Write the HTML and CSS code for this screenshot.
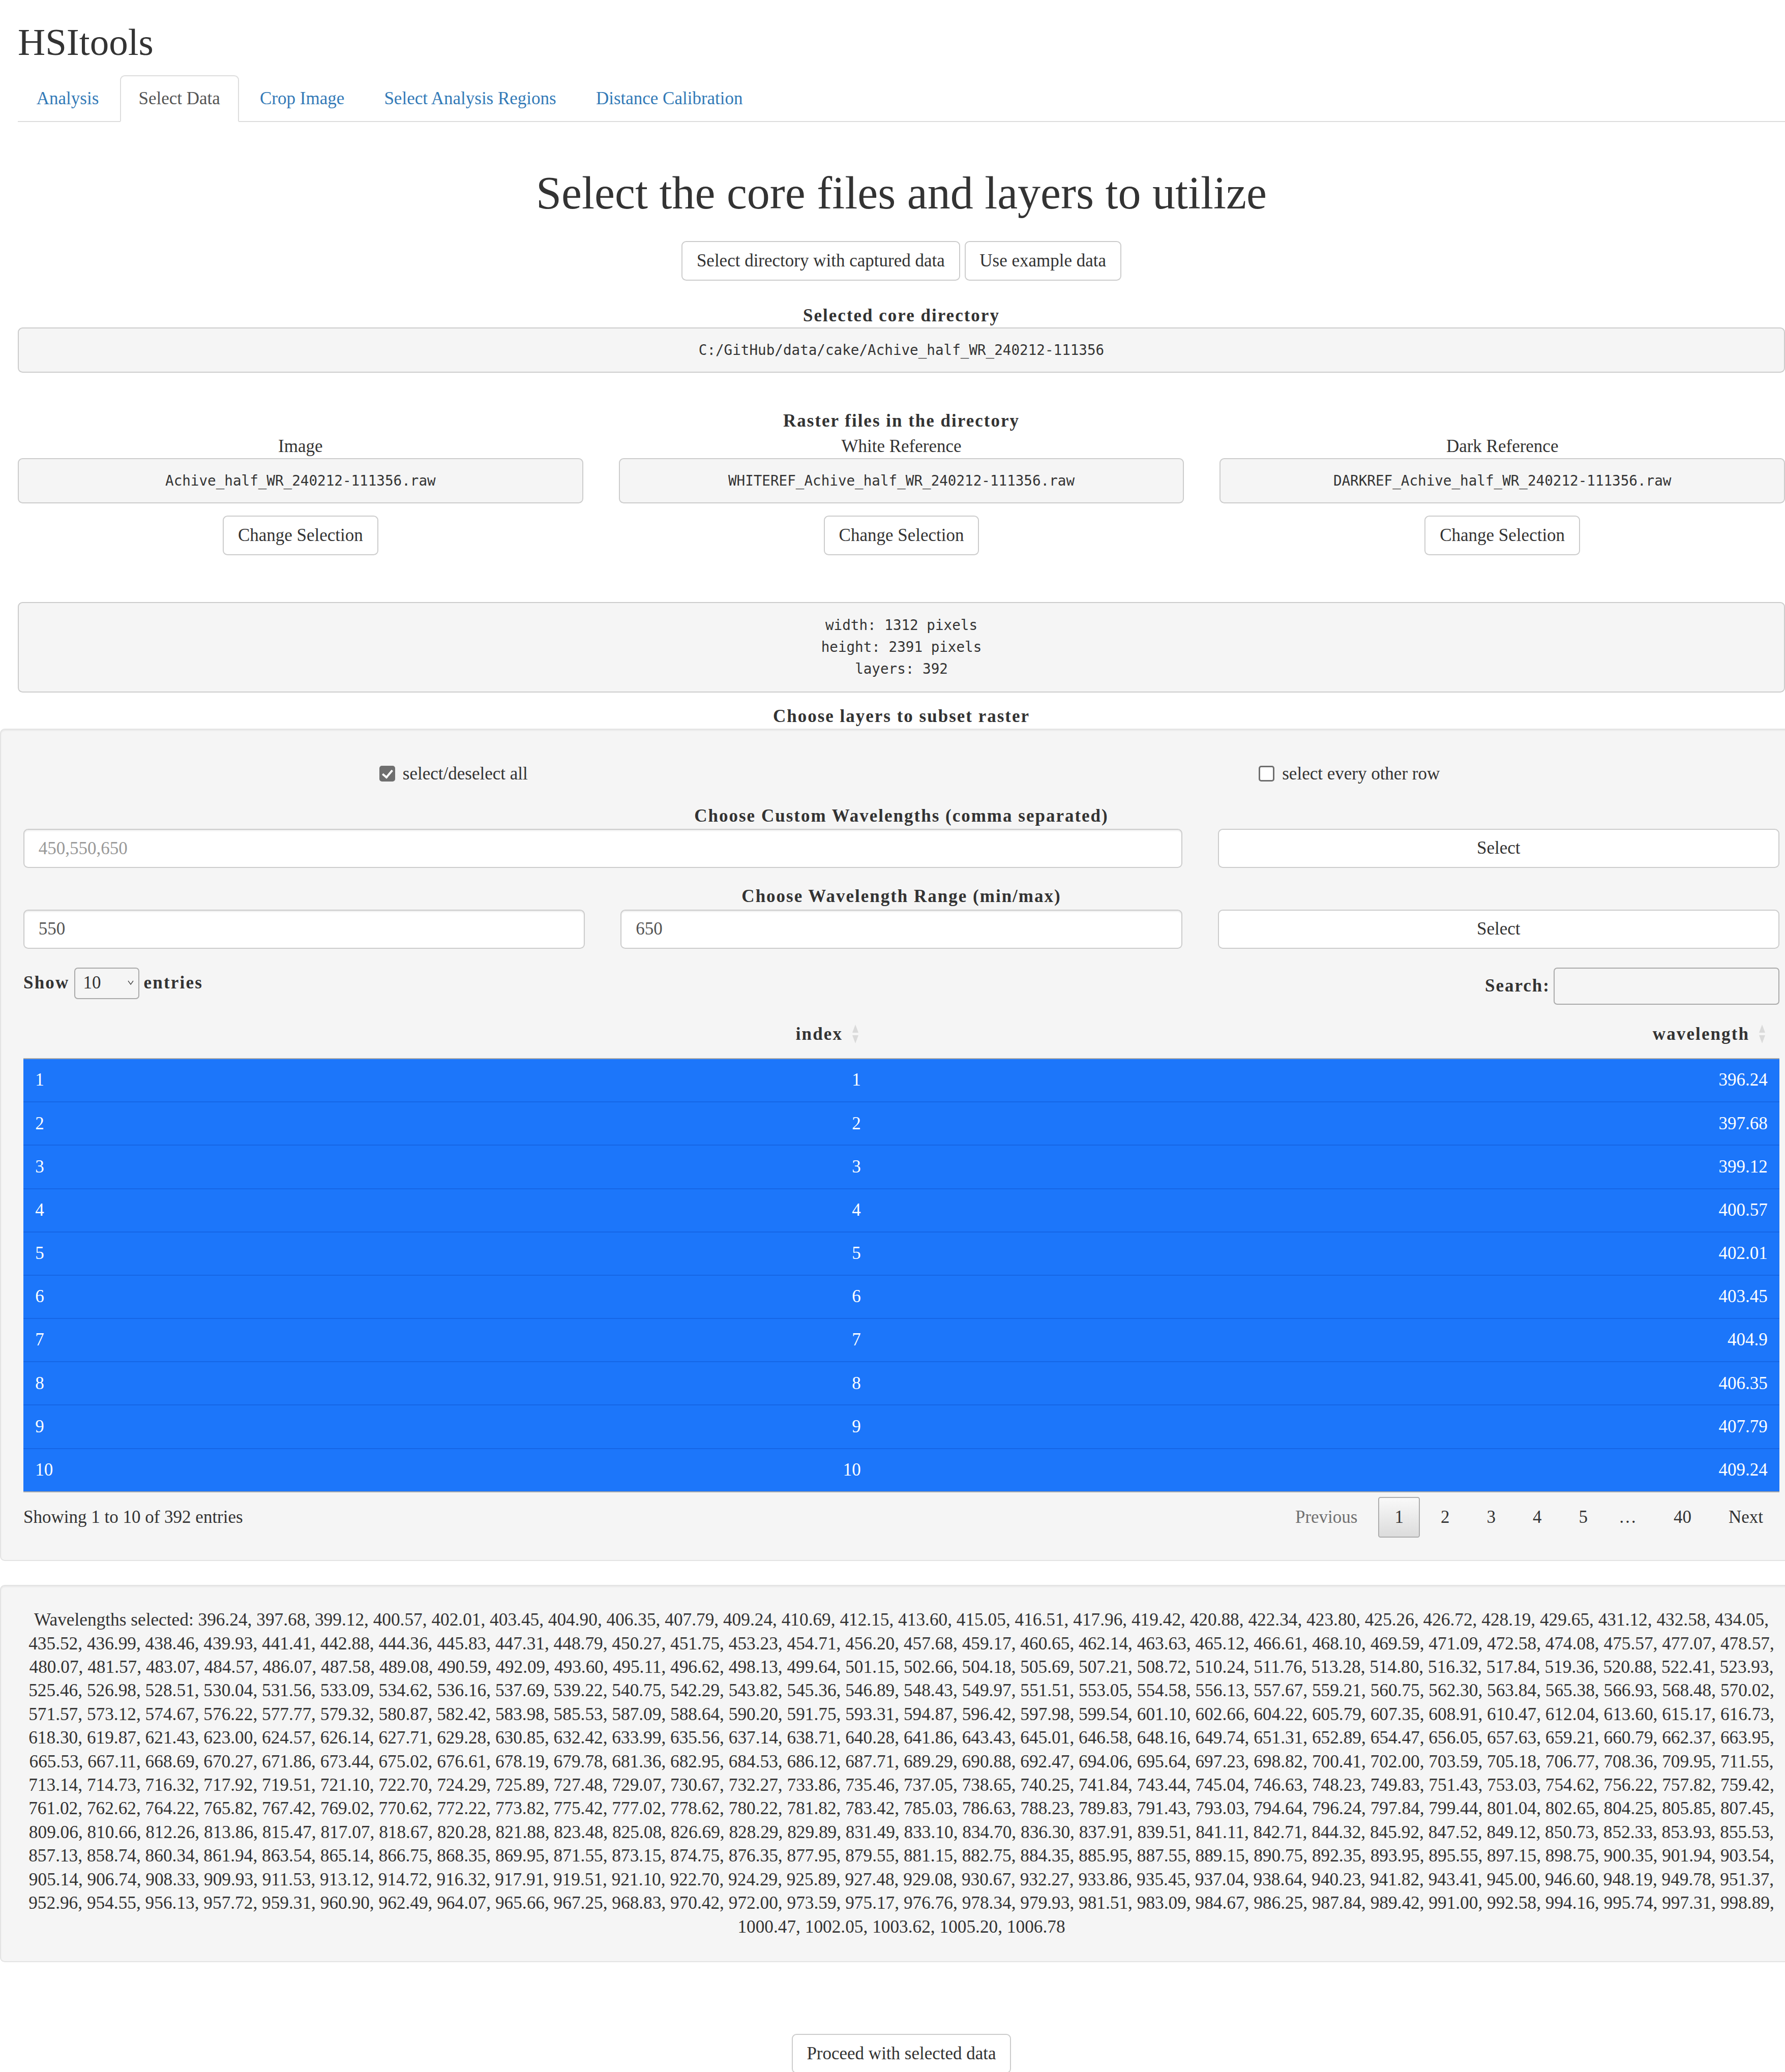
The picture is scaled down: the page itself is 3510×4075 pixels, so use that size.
FILE: index.html
```html
<!DOCTYPE html>
<html lang="en">
<head>
<meta charset="utf-8">
<title>HSItools</title>
<link rel="stylesheet" href="styles.css">
</head>
<body>
<div class="page">
  <h2 class="app-title">HSItools</h2>
  <ul class="tabs">
    <li><a>Analysis</a></li>
    <li class="active"><a>Select Data</a></li>
    <li><a>Crop Image</a></li>
    <li><a>Select Analysis Regions</a></li>
    <li><a>Distance Calibration</a></li>
  </ul>

  <div class="tab-content">
    <h1 class="page-heading">Select the core files and layers to utilize</h1>
    <div class="btn-row">
      <button class="btn">Select directory with captured data</button>
      <button class="btn">Use example data</button>
    </div>

    <div class="field-label dir-label">Selected core directory</div>
    <pre class="out">C:/GitHub/data/cake/Achive_half_WR_240212-111356</pre>

    <div class="field-label raster-label">Raster files in the directory</div>
    <div class="row row-3">
      <div class="col center">
        <div class="file-label">Image</div>
        <pre class="out">Achive_half_WR_240212-111356.raw</pre>
        <button class="btn change-btn">Change Selection</button>
      </div>
      <div class="col center">
        <div class="file-label">White Reference</div>
        <pre class="out">WHITEREF_Achive_half_WR_240212-111356.raw</pre>
        <button class="btn change-btn">Change Selection</button>
      </div>
      <div class="col center">
        <div class="file-label">Dark Reference</div>
        <pre class="out">DARKREF_Achive_half_WR_240212-111356.raw</pre>
        <button class="btn change-btn">Change Selection</button>
      </div>
    </div>

    <pre class="out info">width: 1312 pixels
height: 2391 pixels
layers: 392</pre>

    <div class="field-label layers-label">Choose layers to subset raster</div>
    <div class="well">
      <div class="row row-2 checks">
        <div class="col center">
          <label class="check"><input type="checkbox" checked>select/deselect all</label>
        </div>
        <div class="col center">
          <label class="check"><input type="checkbox">select every other row</label>
        </div>
      </div>

      <div class="field-label">Choose Custom Wavelengths (comma separated)</div>
      <div class="row row-3">
        <div class="col span-2"><input class="input" type="text" placeholder="450,550,650"></div>
        <div class="col"><button class="btn btn-block">Select</button></div>
      </div>

      <div class="field-label range-label">Choose Wavelength Range (min/max)</div>
      <div class="row row-3">
        <div class="col"><input class="input" type="text" value="550"></div>
        <div class="col"><input class="input" type="text" value="650"></div>
        <div class="col"><button class="btn btn-block">Select</button></div>
      </div>

      <div class="dt-top">
        <div class="dt-length">Show
          <span class="dt-select-wrap">
            <select class="dt-select"><option>10</option></select>
            <svg viewBox="0 0 12 9" aria-hidden="true"><polyline points="1,1 6,8 11,1" fill="none" stroke="#444" stroke-width="1.4"/></svg>
          </span>
          entries</div>
        <div class="dt-search">Search:<input type="search"></div>
      </div>

      <table class="dt-table">
        <colgroup><col class="c1"><col class="c2"><col class="c3"></colgroup>
        <thead>
          <tr><th class="plain"></th><th class="sortable">index</th><th class="sortable">wavelength</th></tr>
        </thead>
        <tbody>
          <tr><td class="rn">1</td><td>1</td><td>396.24</td></tr>
          <tr><td class="rn">2</td><td>2</td><td>397.68</td></tr>
          <tr><td class="rn">3</td><td>3</td><td>399.12</td></tr>
          <tr><td class="rn">4</td><td>4</td><td>400.57</td></tr>
          <tr><td class="rn">5</td><td>5</td><td>402.01</td></tr>
          <tr><td class="rn">6</td><td>6</td><td>403.45</td></tr>
          <tr><td class="rn">7</td><td>7</td><td>404.9</td></tr>
          <tr><td class="rn">8</td><td>8</td><td>406.35</td></tr>
          <tr><td class="rn">9</td><td>9</td><td>407.79</td></tr>
          <tr><td class="rn">10</td><td>10</td><td>409.24</td></tr>
        </tbody>
      </table>

      <div class="dt-bottom">
        <div class="dt-info">Showing 1 to 10 of 392 entries</div>
        <div class="pager">
          <span class="page-btn disabled">Previous</span>
          <span class="page-btn current">1</span>
          <span class="page-btn">2</span>
          <span class="page-btn">3</span>
          <span class="page-btn">4</span>
          <span class="page-btn">5</span>
          <span class="ellipsis">…</span>
          <span class="page-btn">40</span>
          <span class="page-btn">Next</span>
        </div>
      </div>
    </div>

    <div class="well wl-well">
      <p>Wavelengths selected: 396.24, 397.68, 399.12, 400.57, 402.01, 403.45, 404.90, 406.35, 407.79, 409.24, 410.69, 412.15, 413.60, 415.05, 416.51, 417.96, 419.42, 420.88, 422.34, 423.80, 425.26, 426.72, 428.19, 429.65, 431.12, 432.58, 434.05, 435.52, 436.99, 438.46, 439.93, 441.41, 442.88, 444.36, 445.83, 447.31, 448.79, 450.27, 451.75, 453.23, 454.71, 456.20, 457.68, 459.17, 460.65, 462.14, 463.63, 465.12, 466.61, 468.10, 469.59, 471.09, 472.58, 474.08, 475.57, 477.07, 478.57, 480.07, 481.57, 483.07, 484.57, 486.07, 487.58, 489.08, 490.59, 492.09, 493.60, 495.11, 496.62, 498.13, 499.64, 501.15, 502.66, 504.18, 505.69, 507.21, 508.72, 510.24, 511.76, 513.28, 514.80, 516.32, 517.84, 519.36, 520.88, 522.41, 523.93, 525.46, 526.98, 528.51, 530.04, 531.56, 533.09, 534.62, 536.16, 537.69, 539.22, 540.75, 542.29, 543.82, 545.36, 546.89, 548.43, 549.97, 551.51, 553.05, 554.58, 556.13, 557.67, 559.21, 560.75, 562.30, 563.84, 565.38, 566.93, 568.48, 570.02, 571.57, 573.12, 574.67, 576.22, 577.77, 579.32, 580.87, 582.42, 583.98, 585.53, 587.09, 588.64, 590.20, 591.75, 593.31, 594.87, 596.42, 597.98, 599.54, 601.10, 602.66, 604.22, 605.79, 607.35, 608.91, 610.47, 612.04, 613.60, 615.17, 616.73, 618.30, 619.87, 621.43, 623.00, 624.57, 626.14, 627.71, 629.28, 630.85, 632.42, 633.99, 635.56, 637.14, 638.71, 640.28, 641.86, 643.43, 645.01, 646.58, 648.16, 649.74, 651.31, 652.89, 654.47, 656.05, 657.63, 659.21, 660.79, 662.37, 663.95, 665.53, 667.11, 668.69, 670.27, 671.86, 673.44, 675.02, 676.61, 678.19, 679.78, 681.36, 682.95, 684.53, 686.12, 687.71, 689.29, 690.88, 692.47, 694.06, 695.64, 697.23, 698.82, 700.41, 702.00, 703.59, 705.18, 706.77, 708.36, 709.95, 711.55, 713.14, 714.73, 716.32, 717.92, 719.51, 721.10, 722.70, 724.29, 725.89, 727.48, 729.07, 730.67, 732.27, 733.86, 735.46, 737.05, 738.65, 740.25, 741.84, 743.44, 745.04, 746.63, 748.23, 749.83, 751.43, 753.03, 754.62, 756.22, 757.82, 759.42, 761.02, 762.62, 764.22, 765.82, 767.42, 769.02, 770.62, 772.22, 773.82, 775.42, 777.02, 778.62, 780.22, 781.82, 783.42, 785.03, 786.63, 788.23, 789.83, 791.43, 793.03, 794.64, 796.24, 797.84, 799.44, 801.04, 802.65, 804.25, 805.85, 807.45, 809.06, 810.66, 812.26, 813.86, 815.47, 817.07, 818.67, 820.28, 821.88, 823.48, 825.08, 826.69, 828.29, 829.89, 831.49, 833.10, 834.70, 836.30, 837.91, 839.51, 841.11, 842.71, 844.32, 845.92, 847.52, 849.12, 850.73, 852.33, 853.93, 855.53, 857.13, 858.74, 860.34, 861.94, 863.54, 865.14, 866.75, 868.35, 869.95, 871.55, 873.15, 874.75, 876.35, 877.95, 879.55, 881.15, 882.75, 884.35, 885.95, 887.55, 889.15, 890.75, 892.35, 893.95, 895.55, 897.15, 898.75, 900.35, 901.94, 903.54, 905.14, 906.74, 908.33, 909.93, 911.53, 913.12, 914.72, 916.32, 917.91, 919.51, 921.10, 922.70, 924.29, 925.89, 927.48, 929.08, 930.67, 932.27, 933.86, 935.45, 937.04, 938.64, 940.23, 941.82, 943.41, 945.00, 946.60, 948.19, 949.78, 951.37, 952.96, 954.55, 956.13, 957.72, 959.31, 960.90, 962.49, 964.07, 965.66, 967.25, 968.83, 970.42, 972.00, 973.59, 975.17, 976.76, 978.34, 979.93, 981.51, 983.09, 984.67, 986.25, 987.84, 989.42, 991.00, 992.58, 994.16, 995.74, 997.31, 998.89, 1000.47, 1002.05, 1003.62, 1005.20, 1006.78</p>
    </div>

    <div class="proceed">
      <button class="btn">Proceed with selected data</button>
    </div>
  </div>
</div>
</body>
</html>
```

FILE: styles.css
```css
* { box-sizing: border-box; }

html, body {
  margin: 0;
  padding: 0;
  overflow: hidden;
  background: #fff;
}

body {
  font-family: "Liberation Serif", "Times New Roman", serif;
  font-size: 35px;
  line-height: 46.4px;
  color: #333;
}

.page {
  width: 3510px;
  padding-left: 35px;
  overflow: hidden;
}

.app-title {
  font-size: 75px;
  font-weight: 400;
  line-height: 82.5px;
  margin: 42px 0 23px;
}

/* tabs */
.tabs {
  list-style: none;
  margin: 0;
  padding: 0;
  display: flex;
  border-bottom: 2.3px solid #ddd;
}
.tabs li { margin-bottom: -2.3px; }
.tabs a {
  display: block;
  padding: 21px 34.8px;
  margin-right: 4.6px;
  border: 2.3px solid transparent;
  border-radius: 9.3px 9.3px 0 0;
  color: #337ab7;
  text-decoration: none;
  line-height: 46.4px;
}
.tabs .active a {
  color: #555;
  background: #fff;
  border-color: #ddd #ddd transparent;
}

.page-heading {
  font-size: 90px;
  line-height: 99px;
  font-weight: 400;
  text-align: center;
  margin: 90px 0 45px;
}

.btn-row {
  display: flex;
  justify-content: center;
  gap: 9px;
}

.btn {
  font: inherit;
  color: #333;
  background: #fff;
  border: 2.3px solid #ccc;
  border-radius: 9.3px;
  padding: 13.9px 27.8px;
  line-height: 46.4px;
  margin: 0;
}

.field-label {
  font-weight: 700;
  text-align: center;
  letter-spacing: 2px;
}
.dir-label { margin-top: 46px; }
.raster-label { margin-top: 72px; }
.layers-label { margin-top: 24px; }
.range-label { margin-top: 33px; }

.out {
  margin: 0;
  font-family: "DejaVu Sans Mono", "Liberation Mono", monospace;
  font-size: 27.6px;
  line-height: 43px;
  padding: 21px;
  background: #f5f5f5;
  border: 2.3px solid #ccc;
  border-radius: 9.3px;
  text-align: center;
  color: #333;
  white-space: pre;
}
.info {
  margin-top: 92px;
  padding-top: 22px;
  padding-bottom: 23px;
}

/* grid rows */
.row {
  display: grid;
  margin: 0 -35px;
}
.row-3 { grid-template-columns: repeat(3, 1fr); }
.row-2 { grid-template-columns: repeat(2, 1fr); }
.col {
  padding: 0 35px;
  min-width: 0;
}
.span-2 { grid-column: span 2; }
.center { text-align: center; }

.file-label { margin-top: 1px; }
.change-btn { margin-top: 24px; }

/* wells */
.well {
  margin: 0 -35px;
  padding: 44px;
  background: #f5f5f5;
  border: 2.3px solid #e3e3e3;
  border-radius: 9.3px;
  box-shadow: inset 0 2.3px 2.3px rgba(0, 0, 0, 0.05);
}

.checks { margin: 20px -35px 32px; }
.field-label + .row { margin-top: 2px; }

.check {
  display: inline-flex;
  align-items: center;
  gap: 15px;
  font-weight: 400;
}
.check input {
  appearance: none;
  -webkit-appearance: none;
  width: 31px;
  height: 31px;
  margin: 0;
  border: 3px solid #6f6f6f;
  border-radius: 5px;
  background: #fff;
  position: relative;
}
.check input:checked {
  background: #6f6f6f;
}
.check input:checked::after {
  content: "";
  position: absolute;
  left: 7px;
  top: 1px;
  width: 8px;
  height: 16px;
  border: solid #fff;
  border-width: 0 4px 4px 0;
  transform: rotate(40deg);
}

.input {
  display: block;
  width: 100%;
  height: 77px;
  padding: 13.9px 27.8px;
  font: inherit;
  color: #555;
  background: #fff;
  border: 2.3px solid #ccc;
  border-radius: 9.3px;
  box-shadow: inset 0 2.3px 2.3px rgba(0, 0, 0, 0.075);
  margin: 0;
}
.input::placeholder { color: #999; }

.btn-block {
  display: block;
  width: 100%;
  height: 77px;
  padding: 0 27.8px;
}

/* data table */
.dt-top {
  display: flex;
  justify-content: space-between;
  align-items: flex-start;
  margin-top: 37px;
  height: 73px;
}
.dt-length {
  font-weight: 700;
  letter-spacing: 2.2px;
  display: flex;
  align-items: center;
  gap: 9px;
  height: 62px;
}
.dt-select-wrap {
  position: relative;
  display: inline-block;
  height: 62px;
}
.dt-select {
  appearance: none;
  -webkit-appearance: none;
  font: inherit;
  font-weight: 400;
  letter-spacing: 0;
  color: #333;
  background: transparent;
  border: 2.3px solid #aaa;
  border-radius: 7px;
  width: 128px;
  height: 62px;
  padding: 0 0 0 16px;
  margin: 0;
}
.dt-select-wrap svg {
  position: absolute;
  right: 11px;
  top: 25px;
  width: 12px;
  height: 9px;
}
.dt-search {
  font-weight: 700;
  letter-spacing: 2px;
  display: flex;
  align-items: center;
  height: 73px;
}
.dt-search input {
  margin-left: 7px;
  width: 444px;
  height: 73px;
  border: 2.3px solid #aaa;
  border-radius: 7px;
  background: transparent;
  font: inherit;
}

.dt-table {
  width: 100%;
  table-layout: fixed;
  border-collapse: separate;
  border-spacing: 0;
  margin-top: 11px;
  border-bottom: 2.3px solid #a9a9a9;
}
.dt-table .c1 { width: 790px; }
.dt-table .c2 { width: 880px; }
.dt-table th {
  font-weight: 700;
  letter-spacing: 2.1px;
  text-align: right;
  padding: 24px 59px 24px 23.2px;
  border-bottom: 2.3px solid #a9a9a9;
  position: relative;
  line-height: 46.4px;
}
.dt-table th.sortable::before,
.dt-table th.sortable::after {
  content: "";
  position: absolute;
  right: 28px;
  top: 50%;
  border-left: 6px solid transparent;
  border-right: 6px solid transparent;
}
.dt-table th.sortable::before {
  margin-top: -19px;
  border-bottom: 16px solid #dadada;
}
.dt-table th.sortable::after {
  margin-top: 2px;
  border-top: 16px solid #dadada;
}
.dt-table td {
  padding: 18.4px 23.2px;
  text-align: right;
  color: #fff;
  background: #1c76fa;
  line-height: 46.4px;
}
.dt-table tbody tr + tr td { border-top: 2.3px solid #1566e6; }
.dt-table td.rn { text-align: left; }

.dt-bottom {
  display: flex;
  justify-content: space-between;
  align-items: center;
  margin-top: 9px;
}
.pager {
  display: flex;
  align-items: center;
}
.page-btn {
  padding: 15px 30px;
  margin-left: 9px;
  border: 2.3px solid transparent;
  border-radius: 4.6px;
  color: #333;
}
.page-btn.current {
  border-color: #adadad;
  background: linear-gradient(#f9f9f9, #dcdcdc);
}
.page-btn.disabled { color: #707070; }
.ellipsis {
  padding: 0 32px 0 20px;
  margin-left: 9px;
}

.wl-well {
  margin-top: 47px;
  text-align: center;
  font-size: 35.3px;
}
.wl-well p { margin: 0; }

.proceed {
  text-align: center;
  margin-top: 141px;
}
```
